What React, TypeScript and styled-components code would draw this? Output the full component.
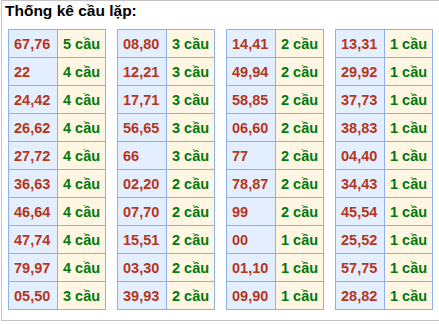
import styled, { createGlobalStyle } from "styled-components";

const data: [string, number][][] = [
  [["67,76", 5], ["22", 4], ["24,42", 4], ["26,62", 4], ["27,72", 4], ["36,63", 4], ["46,64", 4], ["47,74", 4], ["79,97", 4], ["05,50", 3]],
  [["08,80", 3], ["12,21", 3], ["17,71", 3], ["56,65", 3], ["66", 3], ["02,20", 2], ["07,70", 2], ["15,51", 2], ["03,30", 2], ["39,93", 2]],
  [["14,41", 2], ["49,94", 2], ["58,85", 2], ["06,60", 2], ["77", 2], ["78,87", 2], ["99", 2], ["00", 1], ["01,10", 1], ["09,90", 1]],
  [["13,31", 1], ["29,92", 1], ["37,73", 1], ["38,83", 1], ["04,40", 1], ["34,43", 1], ["45,54", 1], ["25,52", 1], ["57,75", 1], ["28,82", 1]],
];

export default function App() {
  return (
    <>
      <GlobalStyle />
      <Box>
        <Title>Thống kê cầu lặp:</Title>
        <Columns>
          {data.map((col, i) => (
            <Table key={i}>
              <tbody>
                {col.map(([pair, count]) => (
                  <tr key={pair}>
                    <PairCell>{pair}</PairCell>
                    <CountCell>{count} cầu</CountCell>
                  </tr>
                ))}
              </tbody>
            </Table>
          ))}
        </Columns>
      </Box>
    </>
  );
}

const GlobalStyle = createGlobalStyle`
  body {
    margin: 0;
    background: #fff;
    font-family: "Liberation Sans", Arial, sans-serif;
  }
`;

const Box = styled.div`
  width: 435px;
  margin-left: 1px;
  border: 1px solid #c4c4c4;
  padding: 0 0 10px 6px;
`;

const Title = styled.div`
  font-size: 15.5px;
  font-weight: bold;
  color: #000;
  height: 28px;
  line-height: 20px;
  margin-left: -3px;
`;

const Columns = styled.div`
  display: grid;
  grid-template-columns: repeat(4, 98px);
  column-gap: 11px;
`;

const Table = styled.table`
  border-collapse: collapse;
  width: 98px;
  table-layout: fixed;

  td {
    border: 1px solid #8eb1ec;
    height: 27px;
    padding: 0 0 0 5px;
    text-align: left;
    white-space: nowrap;
    overflow: hidden;
    font-size: 14.5px;
    font-weight: bold;
  }
`;

const PairCell = styled.td`
  width: 43px;
  background: #e3eeff;
  color: #b5361c;
`;

const CountCell = styled.td`
  background: #fff6e3;
  color: #007a0c;
`;
